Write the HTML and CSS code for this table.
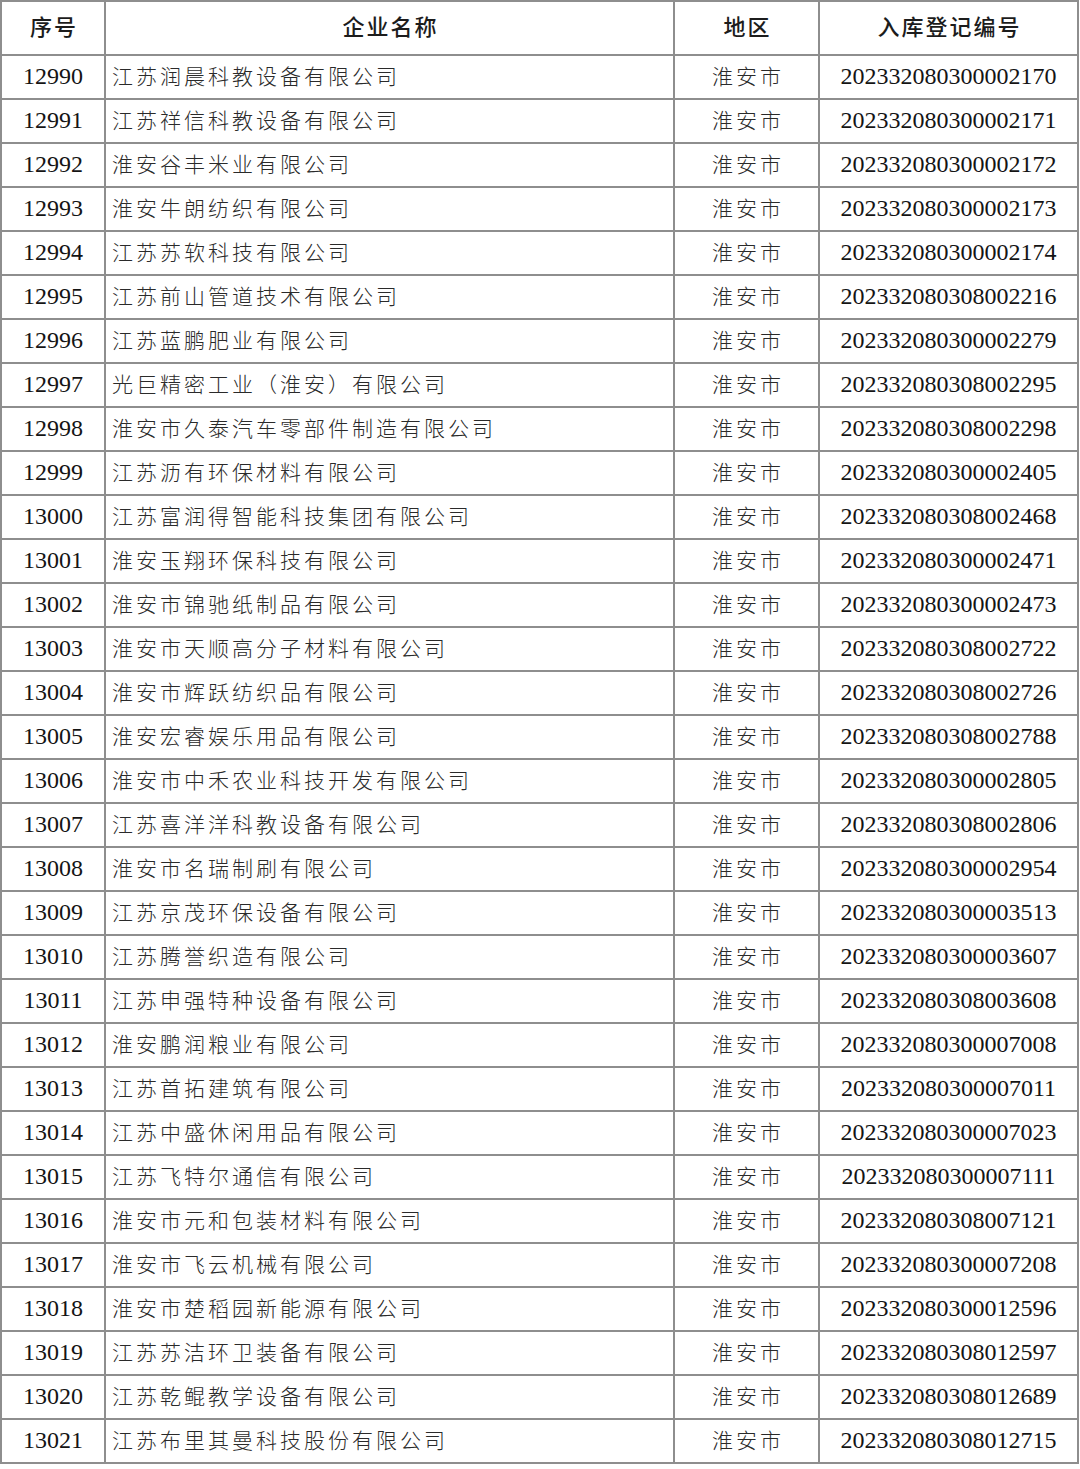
FILE: index.html
```html
<!DOCTYPE html>
<html lang="zh-CN">
<head>
<meta charset="utf-8">
<link rel="stylesheet" href="styles.css">
</head>
<body>
<table class="list">
<colgroup><col class="c-no"><col class="c-name"><col class="c-area"><col class="c-code"></colgroup>
<thead>
<tr><th>序号</th><th>企业名称</th><th>地区</th><th>入库登记编号</th></tr>
</thead>
<tbody>
<tr><td class="no">12990</td><td class="name">江苏润晨科教设备有限公司</td><td class="area">淮安市</td><td class="code">202332080300002170</td></tr>
<tr><td class="no">12991</td><td class="name">江苏祥信科教设备有限公司</td><td class="area">淮安市</td><td class="code">202332080300002171</td></tr>
<tr><td class="no">12992</td><td class="name">淮安谷丰米业有限公司</td><td class="area">淮安市</td><td class="code">202332080300002172</td></tr>
<tr><td class="no">12993</td><td class="name">淮安牛朗纺织有限公司</td><td class="area">淮安市</td><td class="code">202332080300002173</td></tr>
<tr><td class="no">12994</td><td class="name">江苏苏软科技有限公司</td><td class="area">淮安市</td><td class="code">202332080300002174</td></tr>
<tr><td class="no">12995</td><td class="name">江苏前山管道技术有限公司</td><td class="area">淮安市</td><td class="code">202332080308002216</td></tr>
<tr><td class="no">12996</td><td class="name">江苏蓝鹏肥业有限公司</td><td class="area">淮安市</td><td class="code">202332080300002279</td></tr>
<tr><td class="no">12997</td><td class="name">光巨精密工业（淮安）有限公司</td><td class="area">淮安市</td><td class="code">202332080308002295</td></tr>
<tr><td class="no">12998</td><td class="name">淮安市久泰汽车零部件制造有限公司</td><td class="area">淮安市</td><td class="code">202332080308002298</td></tr>
<tr><td class="no">12999</td><td class="name">江苏沥有环保材料有限公司</td><td class="area">淮安市</td><td class="code">202332080300002405</td></tr>
<tr><td class="no">13000</td><td class="name">江苏富润得智能科技集团有限公司</td><td class="area">淮安市</td><td class="code">202332080308002468</td></tr>
<tr><td class="no">13001</td><td class="name">淮安玉翔环保科技有限公司</td><td class="area">淮安市</td><td class="code">202332080300002471</td></tr>
<tr><td class="no">13002</td><td class="name">淮安市锦驰纸制品有限公司</td><td class="area">淮安市</td><td class="code">202332080300002473</td></tr>
<tr><td class="no">13003</td><td class="name">淮安市天顺高分子材料有限公司</td><td class="area">淮安市</td><td class="code">202332080308002722</td></tr>
<tr><td class="no">13004</td><td class="name">淮安市辉跃纺织品有限公司</td><td class="area">淮安市</td><td class="code">202332080308002726</td></tr>
<tr><td class="no">13005</td><td class="name">淮安宏睿娱乐用品有限公司</td><td class="area">淮安市</td><td class="code">202332080308002788</td></tr>
<tr><td class="no">13006</td><td class="name">淮安市中禾农业科技开发有限公司</td><td class="area">淮安市</td><td class="code">202332080300002805</td></tr>
<tr><td class="no">13007</td><td class="name">江苏喜洋洋科教设备有限公司</td><td class="area">淮安市</td><td class="code">202332080308002806</td></tr>
<tr><td class="no">13008</td><td class="name">淮安市名瑞制刷有限公司</td><td class="area">淮安市</td><td class="code">202332080300002954</td></tr>
<tr><td class="no">13009</td><td class="name">江苏京茂环保设备有限公司</td><td class="area">淮安市</td><td class="code">202332080300003513</td></tr>
<tr><td class="no">13010</td><td class="name">江苏腾誉织造有限公司</td><td class="area">淮安市</td><td class="code">202332080300003607</td></tr>
<tr><td class="no">13011</td><td class="name">江苏申强特种设备有限公司</td><td class="area">淮安市</td><td class="code">202332080308003608</td></tr>
<tr><td class="no">13012</td><td class="name">淮安鹏润粮业有限公司</td><td class="area">淮安市</td><td class="code">202332080300007008</td></tr>
<tr><td class="no">13013</td><td class="name">江苏首拓建筑有限公司</td><td class="area">淮安市</td><td class="code">202332080300007011</td></tr>
<tr><td class="no">13014</td><td class="name">江苏中盛休闲用品有限公司</td><td class="area">淮安市</td><td class="code">202332080300007023</td></tr>
<tr><td class="no">13015</td><td class="name">江苏飞特尔通信有限公司</td><td class="area">淮安市</td><td class="code">202332080300007111</td></tr>
<tr><td class="no">13016</td><td class="name">淮安市元和包装材料有限公司</td><td class="area">淮安市</td><td class="code">202332080308007121</td></tr>
<tr><td class="no">13017</td><td class="name">淮安市飞云机械有限公司</td><td class="area">淮安市</td><td class="code">202332080300007208</td></tr>
<tr><td class="no">13018</td><td class="name">淮安市楚稻园新能源有限公司</td><td class="area">淮安市</td><td class="code">202332080300012596</td></tr>
<tr><td class="no">13019</td><td class="name">江苏苏洁环卫装备有限公司</td><td class="area">淮安市</td><td class="code">202332080308012597</td></tr>
<tr><td class="no">13020</td><td class="name">江苏乾鲲教学设备有限公司</td><td class="area">淮安市</td><td class="code">202332080308012689</td></tr>
<tr><td class="no">13021</td><td class="name">江苏布里其曼科技股份有限公司</td><td class="area">淮安市</td><td class="code">202332080308012715</td></tr>
</tbody>
</table>
</body>
</html>
```

FILE: styles.css
```css
html, body {
  margin: 0;
  padding: 0;
  background: #ffffff;
}

.list {
  border-collapse: separate;
  border-spacing: 2px;
  background: #8e8e8e;
  table-layout: fixed;
  width: 1079px;
}

.c-no { width: 102px; }
.c-name { width: 567px; }
.c-area { width: 143px; }
.c-code { width: 257px; }

.list th,
.list td {
  box-sizing: border-box;
  background: #ffffff;
  padding: 0;
  white-space: nowrap;
  overflow: hidden;
  line-height: 1.2;
}

.list th {
  height: 52px;
  padding: 0 0 5px 2px;
  font-family: "Noto Sans CJK SC", "Noto Sans", sans-serif;
  font-size: 22px;
  font-weight: 500;
  letter-spacing: 2px;
  color: #1c1c1c;
  text-align: center;
  vertical-align: middle;
}

.list td {
  height: 42px;
  vertical-align: middle;
}

.list .no,
.list .code {
  font-family: "Liberation Serif", "Times New Roman", serif;
  font-size: 24px;
  color: #141414;
  text-align: center;
  padding-bottom: 1px;
}

.list .name,
.list .area {
  font-family: "Noto Sans CJK SC", sans-serif;
  font-size: 21px;
  font-weight: 300;
  letter-spacing: 3px;
  color: #2a2a2a;
  padding-bottom: 3px;
}

.list .name {
  text-align: left;
  padding-left: 6px;
}

.list .area {
  text-align: center;
  padding-left: 3px;
}
```
